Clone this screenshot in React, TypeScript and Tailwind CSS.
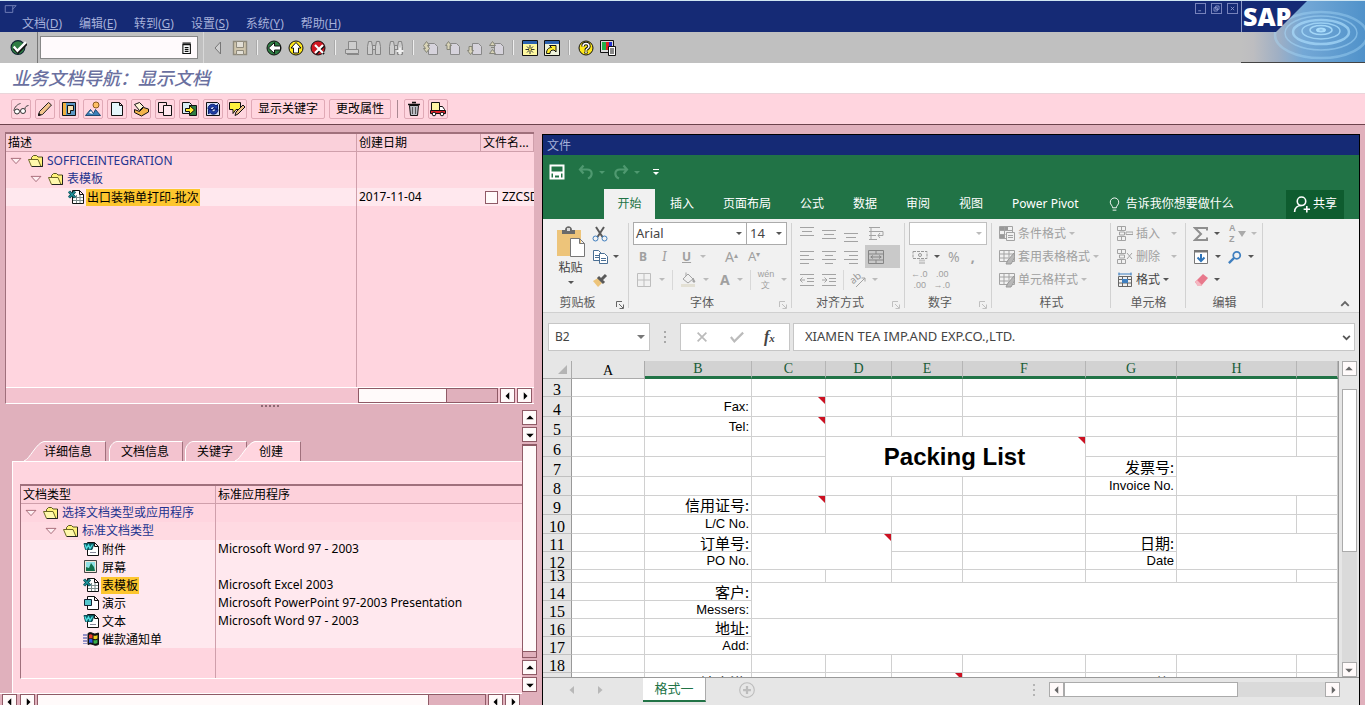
import React from 'react';
import type { ReactNode } from 'react';

type Kids = { children?: ReactNode };

function Svg({ children, className = 'w-4 h-4' }: Kids & { className?: string }) {
  return (
    <svg viewBox="0 0 16 16" className={`shrink-0 ${className}`} fill="none" stroke="#111" aria-hidden="true">
      {children}
    </svg>
  );
}

/* ---------- system toolbar icons ---------- */

const Check = () => (
  <Svg className="w-[17px] h-[17px]">
    <circle cx="7.5" cy="8" r="6.5" fill="#2f7d43" stroke="#123" />
    <path d="M4 8.5l3.5 3.5L15.5 4" stroke="#111" strokeWidth="3.4" />
    <path d="M3.5 7l3.5 4L15 3" stroke="#fff" strokeWidth="2.2" />
  </Svg>
);
const TriLeft = () => (
  <Svg><path d="M10.500 2v12L5 8z" fill="#d0d0d0" stroke="#777" /></Svg>
);
const Save = () => (
  <Svg>
    <path d="M1.5 1.5h13v13h-13z" fill="#cfc5ac" stroke="#8f8a7c" strokeWidth="1.4" />
    <path d="M4.5 1.5h7v6h-7zM4.5 10.5h7v4h-7z" fill="#e2dfd6" stroke="#8f8a7c" />
  </Svg>
);
const Back = () => (
  <Svg>
    <circle cx="8" cy="8" r="7" fill="#2f7d43" />
    <path d="M2.5 8L8.5 2.500v3.500h6v4h-6v3.500z" fill="#fff" />
  </Svg>
);
const Up = () => (
  <Svg>
    <circle cx="8" cy="8" r="7" fill="#ffe81a" />
    <path d="M8 2.5L13 8h-2.5v5h-5V8H3z" fill="#fff" />
  </Svg>
);
const Cancel = () => (
  <Svg>
    <circle cx="8" cy="8" r="7" fill="#d01822" />
    <path d="M6 6l8 8M14 6l-8 8" stroke="#111" strokeWidth="2" />
    <path d="M5 5l8 8M13 5l-8 8" stroke="#fff" strokeWidth="2.2" />
  </Svg>
);
const Print = () => (
  <Svg><path d="M4.5 9.500V1.5h8v8M1.5 9.5h13v4h-13zM3 14.500h12" fill="#cdcdcd" stroke="#888" /></Svg>
);
const Find = ({ next }: { next?: boolean }) => (
  <Svg>
    <path d="M1.5 14.5v-8l1-5h3l1 5v8zM14.5 14.5v-8l-1-5h-3l-1 5v8zM6.5 5.5h3v4h-3z" fill="#cdcdcd" stroke="#858585" />
    {next && <path d="M12 7.5v7M8.500 11h7" stroke="#eee" strokeWidth="2" />}
  </Svg>
);
const PageMove = ({ d }: { d: string }) => (
  <Svg>
    <path d="M6.5 3.5h6l3 3v8h-9z" fill="#d6d3dc" stroke="#888" />
    <path d={d} fill="#d8d3b6" stroke="#858579" />
  </Svg>
);
const NewSession = () => (
  <Svg>
    <path d="M.5.5h15v15H.5z" fill="#fff9a0" />
    <path d="M1 1h14v3H1z" fill="#2c62ae" stroke="none" />
    <path d="M8 5v9M3.5 9.5h9M5 6.5l6 6M11 6.5l-6 6" stroke="#333" />
    <path d="M7 8.5h2v2H7z" fill="#ffef3c" stroke="none" />
  </Svg>
);
const Shortcut = () => (
  <Svg>
    <path d="M.5.5h15v15H.5z" fill="#eef2da" />
    <path d="M1 1h14v3H1z" fill="#2c62ae" stroke="none" />
    <path d="M2.5 13.5c0-4 2-6 5-6L5.500 5.5h6.500v6.500l-2-2c-3 0-4 1-4 3.500z" fill="#ffee30" />
  </Svg>
);
const Help = () => (
  <Svg>
    <circle cx="8" cy="8" r="7" fill="#ffe81a" />
    <path d="M5 6.5c0-4 6-4 6 0 0 2-3 2-3 4M8 11.500v2" stroke="#111" strokeWidth="3.4" />
    <path d="M5 6.5c0-4 6-4 6 0 0 2-3 2-3 4M8 11.500v1.5" stroke="#fff" strokeWidth="1.5" />
  </Svg>
);
const Layout = () => (
  <Svg>
    <path d="M.5.5h13v12H.5z" fill="#ddd" />
    <path d="M2 2h4v8H2z" fill="#22b04a" stroke="none" />
    <path d="M6 2h3v8H6z" fill="#e02020" stroke="none" />
    <path d="M9 2h3v8H9z" fill="#2030d0" stroke="none" />
    <path d="M8.5 6.5h7v9h-7z" fill="#fff" />
    <path d="M10 9h4M10 11h4M10 13h4" />
  </Svg>
);

/* ---------- application toolbar icons ---------- */

const Glasses = () => (
  <Svg>
    <path d="M1 10C1 6 5 3 7.500 2.500M12 8c0-2 1-3 3.500-3.500" stroke="#444" />
    <circle cx="4" cy="10.5" r="2.5" fill="#fff" stroke="#333" />
    <circle cx="10" cy="10" r="2.5" fill="#fff" stroke="#333" />
  </Svg>
);
const Pencil = () => (
  <Svg>
    <path d="M1.5 14.5l1-4 9-9 3 2.5-9 9.5z" fill="#f2c48c" stroke="#222" />
    <path d="M1.5 14.5l.5-2 1.5 1.5z" fill="#111" />
  </Svg>
);
const Navigate = () => (
  <Svg>
    <path d="M1.5 1.5h13v13h-13z" fill="#5c98c4" />
    <path d="M2 2h3v12H2z" fill="#f0b040" stroke="none" />
    <path d="M6.5 4.5h6v5h-3v3h-3z" fill="#f8e1ae" />
  </Svg>
);
const Person = () => (
  <Svg>
    <circle cx="11" cy="4" r="3" fill="#ffc064" stroke="#8a5a20" />
    <path d="M.5 14.5l5-6 3 4 2-4 5 6z" fill="#3a7fb8" stroke="#1d4a70" />
    <path d="M4 12l2-2 2 3" fill="#fff" stroke="none" />
  </Svg>
);
const Page = () => (
  <Svg><path d="M2.5 1.5h8l3 3v10h-11zM10.5 1.5v3h3" fill="#e5f7fc" /></Svg>
);
const OpenBox = () => (
  <Svg>
    <path d="M1.5 3.5l5-2 4 4-4 4z" fill="#fff6d8" />
    <path d="M1.500 8.500l5 2 4-4 5 1.500v3l-7 4-7-3.500z" fill="#f2b44c" />
  </Svg>
);
const Copy = () => (
  <Svg>
    <path d="M1.5 1.5h8v10h-8z" fill="#ffe0e6" />
    <path d="M6.5 4.5h8v10h-8z" fill="#ffe9ef" />
  </Svg>
);
const Export = () => (
  <Svg>
    <path d="M1.5 1.5h7l2 2v9h-9z" fill="#d7ecf4" />
    <path d="M8.5 4.5h7v10h-7z" fill="#2f7d43" />
    <path d="M4.5 7.5h4v-3l5 4.5-5 4.5v-3h-4z" fill="#ffee30" />
  </Svg>
);
const Refresh = () => (
  <Svg>
    <path d="M1.5 1.5h11l2 2v11h-13z" fill="#d2dcf6" />
    <path d="M3 8c0-5 6-6 8-3l1.5-1.500V8H8l1.500-1.500C8 5 5.500 6 5.500 8zM13 8.500c0 5-6 6-8 3L3.500 13V8.500H8L6.500 10c1.500 1.500 4 .5 4-1.500z" fill="#1f3fa8" stroke="#0c1f70" />
  </Svg>
);
const NoteEdit = () => (
  <Svg>
    <path d="M.5 1.5h11v7H7l-3 4v-4H.5z" fill="#ffef3c" />
    <path d="M6 14.500l1-3.500 7-7 2 2-7 7z" fill="#f2c48c" />
  </Svg>
);
const Trash = () => (
  <Svg>
    <path d="M3.5 4.5h9l-1 10h-7z" fill="#b9bcc4" />
    <path d="M2 3.5h12M6 1.5h4" strokeWidth="1.5" />
    <path d="M6.5 6v7M9.5 6v7" stroke="#555" />
  </Svg>
);
const Truck = () => (
  <Svg>
    <path d="M1.5 1.5h8v8h-8z" fill="#fff3a4" />
    <path d="M9.5 5.5h3l2 3v2h-5z" fill="#fff" />
    <path d="M.5 9.5h15v3H.5z" fill="#e0202a" />
    <circle cx="4" cy="13" r="1.8" fill="#fff" />
    <circle cx="12" cy="13" r="1.8" fill="#fff" />
  </Svg>
);

/* ---------- tree icons ---------- */

const Folder = () => (
  <Svg>
    <path d="M3.5 12.5v-8l2-2h3l1.500 1.500h4.500v9.500z" fill="#fff27a" stroke="#5a5620" />
    <path d="M3.5 13.5l-3-7h9.500l3 7z" fill="#fff8ac" stroke="#6d6826" />
    <path d="M14.5 4v9.500H4" stroke="#222" />
  </Svg>
);
const Expander = () => (
  <Svg className="w-3 h-3"><path d="M1.5 4.500h13L8 11.500z" fill="#ffeef2" stroke="#8d4a58" /></Svg>
);
function DocIcon({ kind }: { kind: string }) {
  if (kind === 'image')
    return (
      <Svg>
        <path d="M1.5 1.5h12v12h-12z" fill="#eee6d8" stroke="#444" />
        <path d="M3 3h9v9H3z" fill="#8fe0e4" stroke="none" />
        <path d="M3 12V8l3 1 2-5 3 4 1 4z" fill="#12704c" stroke="none" />
      </Svg>
    );
  if (kind === 'windows')
    return (
      <Svg>
        <path d="M5 2.500c2-1.500 3-1 5 0s3 0 5.5-.5V13.500c-3 1.5-4 .5-5.5 0s-3-1-5 0z" fill="#111" />
        <path d="M6 4c1-1 2-1 3.500 0v3.500C8 7 7 7 6 7.500z" fill="#e53a2e" stroke="none" />
        <path d="M10.500 4.500c1 .5 2 .5 4-.5v3.500c-2 1-3 .5-4 .5z" fill="#f0d020" stroke="none" />
        <path d="M6 8.500c1-1 2-1 3.500 0V12c-1.500-1-2.500-.5-3.500 0z" fill="#2d5be0" stroke="none" />
        <path d="M10.500 9c1 .5 2 .5 4-.5V12c-2 1-3 .5-4 .5z" fill="#36b04a" stroke="none" />
        <path d="M1 3v10M3 3v10" stroke="#2b3da0" strokeDasharray="2 1" />
      </Svg>
    );
  return (
    <Svg>
      <path d="M4.5 1.5h7l4 4v9h-11zM11.500 1.5v4h4" fill="#fff" />
      {kind === 'excel' && (
        <>
          <path d="M5 8.500h10M5 11.5h10M8.5 6v8M12 6v8" stroke="#7b8a8a" />
          <path d="M1 2.500l6 6M7 2.500l-6 6" stroke="#0b4f58" strokeWidth="3" />
          <path d="M1 2.500l6 6M7 2.500l-6 6" stroke="#27b9bf" />
        </>
      )}
      {kind === 'word' && (
        <>
          <path d="M7 11.5h6" stroke="#889" />
          <path d="M1 2.500h10l-2 6H2.500z" fill="#0b5f68" stroke="#0b4f58" />
          <path d="M2 3.500l1.500 4L5.500 4l1.500 3.500L9.500 3.500" stroke="#4fe0e2" strokeWidth="1.3" />
        </>
      )}
      {kind === 'slides' && <path d="M1.5 4.5h7v6h-7z" fill="#55c6cc" stroke="#123" />}
    </Svg>
  );
}

/* ---------- ribbon icons ---------- */

const GREY = '#a3a3a3';

function Caret({ dark }: { dark?: boolean }) {
  return <span className={`shrink-0 border-x-[3px] border-t-[3px] border-x-transparent ${dark ? 'border-t-[#555]' : 'border-t-[#bbb]'}`} />;
}
function Lines({ d, s = GREY }: { d: string; s?: string }) {
  return <Svg><path d={d} stroke={s} /></Svg>;
}
const Launcher = ({ dark }: { dark?: boolean }) => (
  <svg viewBox="0 0 8 8" className="w-2 h-2" fill="none" stroke={dark ? '#666' : '#c0c0c0'} aria-hidden="true">
    <path d="M.5 6V.5H6M3 3l4 4M7.5 3.5v4h-4" />
  </svg>
);
const Paste = () => (
  <svg viewBox="0 0 30 32" className="w-[30px] h-8" fill="none" aria-hidden="true">
    <path d="M1 4h24v26H1z" fill="#edc47a" />
    <path d="M6 4h3c0-5 7-5 7 0h3v4H6z" fill="#6a6a6a" />
    <path d="M11 2h3v3h-3z" fill="#ddd" />
    <path d="M14.5 12.5h9l5 5v13h-14zM23.5 12.5v5h5" fill="#fff" stroke="#777" />
  </svg>
);
const Cut = () => (
  <Svg>
    <path d="M4 1l6.5 10M12 1L5.5 11" stroke="#5a5a5a" strokeWidth="2" />
    <circle cx="3.5" cy="12.500" r="2.5" stroke="#3f7fbf" />
    <circle cx="12.5" cy="12.5" r="2.5" stroke="#3f7fbf" />
  </Svg>
);
const CopyDocs = () => (
  <Svg>
    <path d="M1.5 1.5h5l3 3v7h-8zM3 6.5h4M3 8.5h4" fill="#fff" stroke="#4a6f94" />
    <path d="M7.5 4.5h5l3 3v7h-8zM9 9.5h5M9 11.5h5" fill="#fff" stroke="#4a6f94" />
  </Svg>
);
const Brush = () => (
  <Svg>
    <path d="M1 9l5-3 4 5-4 4z" fill="#edc47a" stroke="none" />
    <path d="M6 5l6 6M9 8l5-5" stroke="#5a5a5a" strokeWidth="3" />
  </Svg>
);
const TableBrush = () => (
  <Svg>
    <path d="M.5 1.5h15v11H.5zM.5 5h15M.5 9h10M5 1.5v11M10 1.5v7" stroke={GREY} />
    <path d="M15 4l-6 7-2 4h5l4-7z" fill="#b8b8b8" stroke="#999" />
  </Svg>
);
const CondFormat = () => (
  <Svg>
    <path d="M.5.5h13v12H.5zM.5 4.5h13M5.5.5v12M.5 8.5h6" stroke={GREY} />
    <path d="M1 1h4v3H1zM6 1h3v3H6zM1 9h4v3H1z" fill="#999" stroke="none" />
    <path d="M7.5 6.5h8v8h-8zM9 9.5h5M9 11.5h5" fill="#f1f1f1" stroke={GREY} />
  </Svg>
);
const CellsInsert = ({ del }: { del?: boolean }) => (
  <Svg>
    <path d="M.5.5h8v4h-8zM.5 10.5h8v4h-8zM4.5.5v4M4.5 10.5v4M2.500 6h5v3h-5z" stroke={GREY} />
    <path d={del ? 'M10 4l5 6M15 4l-5 6' : 'M9 6h7v2.500H9z'} stroke={GREY} />
  </Svg>
);
const CellsFormat = () => (
  <Svg>
    <path d="M1.5 4.5h13v10h-13zM1.5 7.5h13M1.5 11h13M5.5 4.5v10M10.5 4.5v10" stroke="#666" />
    <path d="M1.5 2h13M2 .5v3M14 .5v3" stroke="#3f7fbf" />
    <path d="M5 7h6v4H5z" fill="#3f7fbf" stroke="none" />
  </Svg>
);
const FillDown = () => (
  <Svg>
    <path d="M1.5 1.5h13v13h-13z" fill="#fff" stroke="#777" />
    <path d="M1 1h14v2.500H1z" fill="#777" stroke="none" />
    <path d="M8 5v7M4.5 8.5L8 12l3.500-3.500" stroke="#2f74b8" strokeWidth="2" />
  </Svg>
);
const Magnifier = () => (
  <Svg className="w-[14px] h-[14px]">
    <circle cx="10" cy="6" r="4" stroke="#3f7fbf" strokeWidth="2" />
    <path d="M7 9l-6 6" stroke="#3f7fbf" strokeWidth="2.6" />
  </Svg>
);
const Eraser = () => (
  <Svg>
    <path d="M2 10l8-8 5 4-7 8H5z" fill="#e8798c" stroke="none" />
    <path d="M2 10l2-2 5 5-1 1H5z" fill="#f5b8c2" stroke="none" />
  </Svg>
);
const Bucket = () => (
  <Svg>
    <path d="M3 7l5-5 5 5-5 4zM6 4V.5" stroke={GREY} />
    <path d="M13 6l2 4h-2z" fill={GREY} stroke={GREY} />
    <path d="M1 12h14v3H1z" fill="#e3e0d4" stroke="none" />
  </Svg>
);
const Currency = () => (
  <Svg>
    <path d="M1 2.5h14v7H1z" stroke="#999" strokeDasharray="3 1" />
    <circle cx="8" cy="6" r="1.5" stroke="#999" />
    <path d="M7 11.5h6M7 14h6" stroke="#c9c9c9" strokeWidth="2" />
  </Svg>
);
const Orient = () => (
  <Svg>
    <path d="M6 15l9-9M11.500 6H15v3.500" stroke={GREY} />
    <text x="1" y="11" transform="rotate(-40 4 9)" fontSize="10" fontFamily="Noto Sans" fill="#999" stroke="none">ab</text>
  </Svg>
);

/* ---------- scrollbars ---------- */

const arrowPath: Record<string, string> = {
  left: 'M5 1v6L2 4z',
  right: 'M3 1v6l3-3z',
  up: 'M1 5h6L4 2z',
  down: 'M1 3h6L4 6z',
};

function ArrowBtn({ dir, grey }: { dir: string; grey?: boolean }) {
  return (
    <button
      aria-label={`scroll ${dir}`}
      className={`flex h-[15px] w-[15px] shrink-0 items-center justify-center border bg-[#fffafa] ${grey ? 'border-[#ababab]' : 'border-[#8f5a66]'}`}
    >
      <svg viewBox="0 0 8 8" className="w-[10px] h-[10px]" fill={grey ? '#666' : '#000'} aria-hidden="true">
        <path d={arrowPath[dir]} />
      </svg>
    </button>
  );
}

/* ---------- SAP frame ---------- */

const menus = [['文档', 'D'], ['编辑', 'E'], ['转到', 'G'], ['设置', 'S'], ['系统', 'Y'], ['帮助', 'H']];

const moves = [
  'M1.500 5.500l3-4 3 4h-2l2 3-3 4-3-4h2l-2-3z',
  'M1.500 5.500l3-4 3 4H6v4H3v-4z',
  'M1.500 10.500H3v-4h3v4h1.500l-3 4z',
  'M1.500 5.500l3-4 3 4zM1.500 13.500l3-4 3 4zM3 7.500h3',
];

const systemTools: { name: string; icon: ReactNode }[][] = [
  [{ name: '保存', icon: <Save /> }],
  [{ name: '返回', icon: <Back /> }, { name: '退出', icon: <Up /> }, { name: '取消', icon: <Cancel /> }],
  [{ name: '打印', icon: <Print /> }, { name: '查找', icon: <Find /> }, { name: '继续查找', icon: <Find next /> }],
  moves.map((d, i) => ({ name: `页 ${i + 1}`, icon: <PageMove d={d} /> })),
  [{ name: '新会话', icon: <NewSession /> }, { name: '快捷方式', icon: <Shortcut /> }],
  [{ name: '帮助', icon: <Help /> }, { name: '布局', icon: <Layout /> }],
];

function Header() {
  return (
    <header className="flex h-[63px] shrink-0 border-t border-[#cfe6f2] border-b border-b-[#444]">
      <div className="flex min-w-0 flex-1 flex-col">
        <div className="h-[31px] bg-[#152a75] text-[#a6b0da]">
          <div className="flex h-[14px] items-start justify-between pl-[3px] pr-[3px] pt-[2px]">
            <Svg className="w-[15px] h-[12px]"><path d="M1 3.5h10v9H1zM11 3.5h4.500l-5 5" stroke="#8894c8" /></Svg>
            <div className="flex gap-[5px]">
              {['M4 12h5', 'M6.5 3.5h6v6h-6zM3.5 6.5h6v6h-6z', 'M5 5l6 6M11 5l-6 6'].map((d) => (
                <button key={d} aria-label="window" className="h-[11px] w-[11px] border border-[#7682bb]">
                  <svg viewBox="0 0 16 16" className="h-full w-full" fill="none" stroke="#8f9bd0" strokeWidth="1.5" aria-hidden="true"><path d={d} /></svg>
                </button>
              ))}
            </div>
          </div>
          <nav className="flex gap-[17px] pl-[22px] text-xs leading-[18px]">
            {menus.map(([t, k]) => (
              <button key={k}>{t}(<u>{k}</u>)</button>
            ))}
          </nav>
        </div>
        <div className="flex flex-1 items-center bg-[#c0c0c0]">
          <button aria-label="确认" className="flex w-[38px] justify-center border-r border-[#777] py-[7px] pr-px"><Check /></button>
          <div className="ml-[2px] flex h-[23px] w-[158px] items-center border border-[#888] bg-[#fffafc] pr-1">
            <input aria-label="命令" className="h-full min-w-0 flex-1 bg-transparent px-1 outline-none" />
            <Svg className="w-[12px] h-3"><path d="M2.500 3.500h10v12h-10z" fill="#fff" strokeWidth="1.5" /><path d="M5 7.500h5M5 10h5M5 12.500h5M2 1.500h11" strokeWidth="1.5" /></Svg>
          </div>
          <div className="ml-[5px] h-full w-px bg-[#d9d9d9]" />
          <button aria-label="收起" className="ml-[3px] flex w-[22px] justify-center"><TriLeft /></button>
          {systemTools.map((group, i) => (
            <div key={i} className="flex items-center">
              {i > 0 && <div className="mx-[5px] h-[15px] w-[2px] border-r border-[#eee] bg-[#aaa]" />}
              {group.map((t) => (
                <button key={t.name} aria-label={t.name} className="flex w-[22px] justify-center">{t.icon}</button>
              ))}
            </div>
          ))}
        </div>
      </div>
      <div className="relative w-[124px] shrink-0">
        <svg viewBox="0 0 124 61" className="h-[61px] w-[124px]" fill="none" aria-hidden="true">
          <defs>
            <linearGradient id="sea" x1="0" y1="0" x2="1" y2="0">
              <stop offset="0" stopColor="#c0c0c0" />
              <stop offset=".1" stopColor="#bdbdc0" />
              <stop offset=".3" stopColor="#9fafc4" />
              <stop offset=".5" stopColor="#74a8d6" />
              <stop offset="1" stopColor="#5092ca" />
            </linearGradient>
          </defs>
          <path d="M0 0h124v61H0z" fill="url(#sea)" />
          <g stroke="#a9dcfb">
            <ellipse cx="80" cy="29" rx="4" ry="1.500" strokeWidth="2" />
            <ellipse cx="80" cy="29" rx="11" ry="4.500" strokeWidth="1.500" opacity=".9" />
            <ellipse cx="80" cy="30" rx="19" ry="8" strokeWidth="1.500" opacity=".8" />
            <ellipse cx="80" cy="31" rx="28" ry="12" strokeWidth="2.500" opacity=".7" />
            <ellipse cx="80" cy="32" rx="36" ry="17" strokeWidth="1.500" opacity=".5" />
            <ellipse cx="80" cy="34" rx="46" ry="23" strokeWidth="2.500" opacity=".4" />
          </g>
          <path d="M0 0h66L35 31H0z" fill="#152a75" />
          <path d="M.5 0v31" stroke="#8f9cc8" />
        </svg>
        <span className="absolute left-[2px] top-0 font-['Open_Sans'] text-[25px] font-extrabold leading-[31px] text-white">SAP</span>
      </div>
    </header>
  );
}

const appTools: { name: string; icon: ReactNode }[] = [
  { name: '显示', icon: <Glasses /> },
  { name: '更改', icon: <Pencil /> },
  { name: '导航', icon: <Navigate /> },
  { name: '用户', icon: <Person /> },
  { name: '创建', icon: <Page /> },
  { name: '打开', icon: <OpenBox /> },
  { name: '复制', icon: <Copy /> },
  { name: '导出', icon: <Export /> },
  { name: '刷新', icon: <Refresh /> },
  { name: '注释', icon: <NoteEdit /> },
];

function ToolButton({ name, children }: Kids & { name: string }) {
  return (
    <button aria-label={name} className="flex h-5 w-5 items-center justify-center rounded-[2px] border border-[#e0a9b6]">
      {children}
    </button>
  );
}

function AppToolbar() {
  return (
    <div className="flex h-[31px] shrink-0 items-center gap-1 border-b border-[#6d434d] bg-[#ffd5df] pl-[11px] text-xs">
      {appTools.map((t) => (
        <ToolButton key={t.name} name={t.name}>{t.icon}</ToolButton>
      ))}
      <button className="h-5 w-[74px] rounded-[2px] border border-[#e0a9b6]">显示关键字</button>
      <button className="h-5 w-[62px] rounded-[2px] border border-[#e0a9b6]">更改属性</button>
      <div className="mx-[2px] h-[18px] w-px bg-[#a98791]" />
      <ToolButton name="删除"><Trash /></ToolButton>
      <ToolButton name="运输"><Truck /></ToolButton>
    </div>
  );
}

/* ---------- left side ---------- */

type Node = { label: string; level: number; kind: string; cols?: string[]; on?: boolean };

function TreeLabel({ node }: { node: Node }) {
  if (node.kind === 'folder')
    return (
      <span className={`flex items-center text-[#24348f] ${node.level ? 'pl-[22px]' : 'pl-[2px]'}`}>
        <Expander />
        <span className="ml-[6px] mr-[3px]"><Folder /></span>
        {node.label}
      </span>
    );
  return (
    <span className="flex items-center pl-[60px]">
      <DocIcon kind={node.kind} />
      <span className={`ml-[2px] px-px leading-[17px] ${node.on ? 'bg-[#fdc62e]' : ''}`}>{node.label}</span>
    </span>
  );
}

const docs: Node[] = [
  { label: 'SOFFICEINTEGRATION', level: 0, kind: 'folder' },
  { label: '表模板', level: 1, kind: 'folder' },
  { label: '出口装箱单打印-批次', level: 2, kind: 'excel', on: true, cols: ['2017-11-04', 'ZZCSD'] },
];

const types: Node[] = [
  { label: '选择文档类型或应用程序', level: 0, kind: 'folder' },
  { label: '标准文档类型', level: 1, kind: 'folder' },
  { label: '附件', level: 2, kind: 'word', cols: ['Microsoft Word 97 - 2003'] },
  { label: '屏幕', level: 2, kind: 'image' },
  { label: '表模板', level: 2, kind: 'excel', on: true, cols: ['Microsoft Excel 2003'] },
  { label: '演示', level: 2, kind: 'slides', cols: ['Microsoft PowerPoint 97-2003 Presentation'] },
  { label: '文本', level: 2, kind: 'word', cols: ['Microsoft Word 97 - 2003'] },
  { label: '催款通知单', level: 2, kind: 'windows' },
];

const rowBg = (n: Node) => (n.level === 2 ? 'bg-[#ffe8ee]' : n.level === 1 ? 'bg-[#ffdae2]' : 'bg-[#ffd5df]');
const cell = 'overflow-hidden whitespace-nowrap p-0 pl-[2px]';

function DocumentTree() {
  return (
    <div className="flex h-[272px] shrink-0 flex-col border-b border-l border-t-2 border-b-white border-l-[#a0707c] border-t-[#a0707c] bg-[#ffd5df]">
      <table className="h-[253px] w-full table-fixed border-separate border-spacing-0 text-xs">
        <colgroup>
          <col className="w-[351px]" />
          <col className="w-[124px]" />
          <col />
        </colgroup>
        <thead>
          <tr className="h-[18px] bg-[#fad0da] text-left leading-4">
            {['描述', '创建日期', '文件名...'].map((h) => (
              <th key={h} className={`${cell} border-b border-r border-[#cf9fab] font-normal`}>{h}</th>
            ))}
          </tr>
        </thead>
        <tbody>
          {docs.map((n) => (
            <tr key={n.label} className={`h-[18px] leading-4 ${rowBg(n)}`}>
              <td className={`${cell} border-r border-[#cf9fab]`}><TreeLabel node={n} /></td>
              <td className={cell}>{n.cols?.[0]}</td>
              <td className={cell}>
                {n.cols && (
                  <label className="flex items-center gap-1 pl-[2px]">
                    <input type="checkbox" className="h-[13px] w-[13px] shrink-0 appearance-none border border-[#8f5a66] bg-[#fffafa]" />
                    {n.cols[1]}
                  </label>
                )}
              </td>
            </tr>
          ))}
          <tr>
            <td className="border-r border-[#cf9fab]" />
            <td />
            <td />
          </tr>
        </tbody>
      </table>
      <div className="flex h-4 shrink-0 border-t border-white bg-[#f3c3cf] pl-[352px]">
        <div className="flex h-[15px] min-w-0 flex-1 border border-[#8f5a66] bg-[#e0b0bc]">
          <div className="w-[88px] border-r border-[#8f5a66] bg-[#fffafa]" />
        </div>
        <div className="ml-[2px] mr-[2px] flex gap-[2px]">
          <ArrowBtn dir="left" />
          <ArrowBtn dir="right" />
        </div>
      </div>
    </div>
  );
}

const tabText = 'flex h-5 items-center border-r border-t border-r-[#a0707c] border-t-white text-xs';

function Slant({ wide, fill }: { wide?: boolean; fill: string }) {
  return wide ? (
    <svg viewBox="0 0 20 20" className="h-5 w-5" aria-hidden="true">
      <path d="M0 20C6 18 12 2 20 0v20z" fill={fill} />
      <path d="M0 20C6 18 12 2 20 .5" fill="none" stroke="#fff" />
    </svg>
  ) : (
    <svg viewBox="0 0 8 20" className="h-5 w-2" aria-hidden="true">
      <path d="M0 20V9C1 5 4 1 8 0v20z" fill={fill} />
      <path d="M.5 20V9C1 5 4 1 8 .5" fill="none" stroke="#fff" />
    </svg>
  );
}

function DetailTabs() {
  return (
    <div role="tablist" className="flex h-5 pl-6">
      <button role="tab" className="flex"><Slant wide fill="#f3c3cf" /><span className={`${tabText} w-[62px] bg-[#f3c3cf]`}>详细信息</span></button>
      <button role="tab" className="ml-[3px] flex"><Slant fill="#f3c3cf" /><span className={`${tabText} w-[66px] bg-[#f3c3cf] pl-1`}>文档信息</span></button>
      <button role="tab" className="ml-[2px] flex"><Slant fill="#f3c3cf" /><span className={`${tabText} w-[54px] bg-[#f3c3cf] pl-1`}>关键字</span></button>
      <button role="tab" aria-selected="true" className="-ml-[12px] flex"><Slant wide fill="#ffd5df" /><span className={`${tabText} w-[46px] bg-[#ffd5df] pl-1`}>创建</span></button>
    </div>
  );
}

function TypePanel() {
  return (
    <div className="flex min-h-0 flex-1">
      <div className="flex min-w-0 flex-1 flex-col">
        <div className="min-h-0 flex-1 overflow-hidden pt-[34px]">
          <DetailTabs />
          <div className="ml-[12px] h-full border-l border-t border-white bg-[#ffd5df] pl-[7px] pt-[22px]">
            <table className="h-[195px] w-full table-fixed border-separate border-spacing-0 border-b border-l border-t-2 border-b-white border-l-[#a0707c] border-t-[#a0707c] text-xs">
              <colgroup>
                <col className="w-[195px]" />
                <col />
              </colgroup>
              <thead>
                <tr className="h-[18px] bg-[#fdd1db] text-left leading-4">
                  <th className={`${cell} border-b border-r border-[#cf9fab] font-normal`}>文档类型</th>
                  <th className={`${cell} border-b border-[#cf9fab] font-normal`}>标准应用程序</th>
                </tr>
              </thead>
              <tbody>
                {types.map((n) => (
                  <tr key={n.label + n.level} className={`h-[18px] leading-4 ${rowBg(n)}`}>
                    <td className={`${cell} border-r border-[#cf9fab]`}><TreeLabel node={n} /></td>
                    <td className={cell}>{n.cols?.[0]}</td>
                  </tr>
                ))}
                <tr>
                  <td className="border-r border-[#cf9fab]" />
                  <td />
                </tr>
              </tbody>
            </table>
          </div>
        </div>
        <div className="flex h-[12px] shrink-0 overflow-hidden border-t border-white pl-[2px]">
          <div className="mr-[2px] flex gap-[3px]">
            <ArrowBtn dir="left" />
            <ArrowBtn dir="right" />
          </div>
          <div className="flex h-[15px] flex-1 border border-[#8f5a66] bg-[#e0b0bc]">
            <div className="w-[391px] border-r border-[#8f5a66] bg-[#fffafa]" />
          </div>
          <div className="mx-[2px] flex gap-[2px]">
            <ArrowBtn dir="left" />
            <ArrowBtn dir="right" />
          </div>
        </div>
      </div>
      <div className="mb-[13px] mr-[2px] mt-[3px] flex w-[15px] flex-col gap-[2px]">
        <ArrowBtn dir="up" />
        <ArrowBtn dir="down" />
        <div className="flex min-h-0 flex-1 flex-col border border-t-2 border-[#8f5a66] bg-[#e0b0bc]">
          <div className="mb-[5px] flex-1 border-b border-[#8f5a66] bg-[#fffafa]" />
        </div>
        <ArrowBtn dir="up" />
        <ArrowBtn dir="down" />
      </div>
    </div>
  );
}

/* ---------- spreadsheet ---------- */

const ribbonTabs = ['插入', '页面布局', '公式', '数据', '审阅', '视图', 'Power Pivot'];

function SheetTop() {
  return (
    <div className="bg-[#217346] text-white">
      <div className="flex h-[34px] items-center pl-[6px]">
        <button aria-label="save">
          <Svg>
            <path d="M1.5 1.5h13v13h-13z" stroke="#fff" strokeWidth="2" />
            <path d="M2 8.5h12M5 14v-3.500h6V14" stroke="#fff" strokeWidth="2" />
          </Svg>
        </button>
        <button aria-label="undo" className="ml-[13px] flex items-center gap-[5px]">
          <Svg><path d="M5.500 1.500L2 5.5l3.500 4M2 5.5h7c6 0 6 7 1 9" stroke="#4f9970" strokeWidth="2.2" /></Svg>
          <span className="border-x-[3px] border-t-[3px] border-x-transparent border-t-[#4f9970]" />
        </button>
        <button aria-label="redo" className="ml-[8px] flex items-center gap-[5px]">
          <Svg><path d="M10.500 1.500L14 5.5l-3.500 4M14 5.5H7c-6 0-6 7-1 9" stroke="#4f9970" strokeWidth="2.2" /></Svg>
          <span className="border-x-[3px] border-t-[3px] border-x-transparent border-t-[#4f9970]" />
        </button>
        <button aria-label="customize" className="ml-[13px]">
          <span className="mb-[2px] block h-px w-[6px] bg-white" />
          <span className="block border-x-[3px] border-t-[3px] border-x-transparent border-t-white" />
        </button>
      </div>
      <div className="flex h-[30px] items-center pl-[61px] pr-[15px] text-xs">
        <button className="h-[30px] w-[51px] bg-[#f1f1f1] text-[#217346]">开始</button>
        <div className="ml-[15px] flex gap-[29px]">
          {ribbonTabs.map((t) => <button key={t}>{t}</button>)}
        </div>
        <button className="ml-[28px] flex items-center gap-1">
          <Svg className="w-[15px] h-[15px]"><path d="M6 11.500C6 9 3.5 8.5 3.5 5.5a4.500 4.500 0 0 1 9 0c0 3-2.500 3.500-2.500 6zM6 14h4" stroke="#fff" /></Svg>
          告诉我你想要做什么
        </button>
        <button className="ml-auto flex h-[29px] w-[58px] items-center justify-center gap-[3px] bg-[#0e5c2f]">
          <Svg className="w-[17px] h-[17px]">
            <circle cx="8" cy="5" r="4" stroke="#fff" strokeWidth="1.5" />
            <path d="M1.500 15c0-4 3-6 6.500-6M10 12.5h6M13 9.5v6" stroke="#fff" strokeWidth="1.5" />
          </Svg>
          共享
        </button>
      </div>
    </div>
  );
}

type GroupProps = Kids & { label: string; className: string; launcher?: 'dark' | 'light' };

function Group({ label, className, launcher, children }: GroupProps) {
  return (
    <section className={`relative flex shrink-0 flex-col pt-[3px] after:absolute after:bottom-1 after:right-0 after:top-1 after:w-px after:bg-[#d2d2d2] ${className}`}>
      <div className="h-[69px]">{children}</div>
      <div className={`relative text-center leading-[23px] text-[#5a5a5a] ${launcher ? 'pr-[17px]' : ''}`}>
        {label}
        {launcher && <button aria-label={label} className="absolute right-[5px] top-[10px]"><Launcher dark={launcher === 'dark'} /></button>}
      </div>
    </section>
  );
}

const Row = ({ children, className = '' }: Kids & { className?: string }) => (
  <div className={`flex h-[23px] items-center ${className}`}>{children}</div>
);
const Sep = () => <span className="h-5 w-px shrink-0 bg-[#d8d8d8]" />;
const tiny = "font-['Liberation_Sans'] text-[9px] leading-[11px]";

function Ribbon() {
  return (
    <div className="flex h-[94px] overflow-hidden border-b border-[#d0d0d0] bg-[#f1f1f1] text-xs text-[#a0a0a0]">
      <Group label="剪贴板" className="w-[86px]" launcher="dark">
        <div className="flex pl-[12px]">
          <button className="flex w-[31px] flex-col items-center pt-[4px] text-[#444]">
            <Paste />
            <span className="mb-[3px] w-6 text-center leading-5">粘贴</span>
            <Caret dark />
          </button>
          <div className="ml-[6px]">
            <Row><button aria-label="cut"><Cut /></button></Row>
            <Row className="gap-[5px]"><button aria-label="copy"><CopyDocs /></button><Caret dark /></Row>
            <Row><button aria-label="format painter"><Brush /></button></Row>
          </div>
        </div>
      </Group>
      <Group label="字体" className="w-[163px]" launcher="light">
        <Row className="pl-1 text-[#444]">
          <button className="flex h-[23px] w-[114px] items-center justify-between border border-[#ababab] bg-white pl-[2px] pr-1 text-[13px]">Arial <Caret dark /></button>
          <button className="-ml-px flex h-[23px] w-[41px] items-center justify-between border border-[#ababab] bg-white pl-[3px] pr-1 text-[13px]">14 <Caret dark /></button>
        </Row>
        <Row className="pl-[10px]">
          <b className="w-[22px]">B</b>
          <i className="w-[21px] pl-px font-serif text-sm">I</i>
          <b className="w-[18px]"><u>U</u></b>
          <Caret />
          <span className="ml-[9px] mr-[10px]"><Sep /></span>
          <span className="w-[23px] whitespace-nowrap text-sm">A<sup className="text-[8px]">▴</sup></span>
          <span className="whitespace-nowrap text-[13px]">A<sup className="text-[8px]">▾</sup></span>
        </Row>
        <Row className="gap-[7px] pl-[7px]">
          <Lines d="M1.5 1.5h13v13h-13zM8 1v14M1 8h14" s="#bdbdbd" />
          <Caret />
          <Sep />
          <Bucket />
          <Caret />
          <span className="pl-1 text-sm font-bold leading-4">A</span>
          <Caret />
          <Sep />
          <span className={`text-center ${tiny}`}>wén<br />文</span>
          <Caret />
        </Row>
      </Group>
      <Group label="对齐方式" className="w-[113px]" launcher="light">
        <Row className="gap-[6px] pl-[7px]">
          <Lines d="M1 1.5h14M3 5.5h10M1 9.5h14" />
          <Lines d="M1 4.5h14M3 8.5h10M1 12.5h14" />
          <Lines d="M1 7.5h14M3 11.5h10M1 15.500h14" />
          <span className="pl-[3px]"><Lines d="M1 1.5h11M1 5.5h14v4h-5M1 9.5h7M1 13.5h8M3 1v13M12 7l-2 2.500 2 2.500" /></span>
        </Row>
        <Row className="gap-[6px] pl-[7px]">
          <Lines d="M1 2.5h14M1 6.5h9M1 10.5h14M1 14.5h9" />
          <Lines d="M1 2.5h14M4 6.5h8M1 10.5h14M4 14.5h8" />
          <Lines d="M1 2.5h14M6 6.5h9M1 10.5h14M6 14.5h9" />
          <span className="flex h-[23px] w-[35px] items-center bg-[#c9c9c9] pl-[3px]">
            <Lines d="M.5 1.5h15v13H.5zM.5 5h15M.5 11h15M8 1.5V5M8 11v3.500M2.500 8h11M5 6.500L3 8l2 1.500M11 6.500L13 8l-2 1.500" s="#858585" />
          </span>
        </Row>
        <Row className="gap-[6px] pl-[7px]">
          <Lines d="M1 2.5h14M8 6.5h7M8 9.5h7M1 13.5h14M6 8H1M3.500 5.5L1 8l2.500 2.500" />
          <Lines d="M1 2.5h14M8 6.5h7M8 9.5h7M1 13.5h14M1 8h5M3.500 5.5L6 8l-2.500 2.500" />
          <Sep />
          <Orient />
          <Caret />
        </Row>
      </Group>
      <Group label="数字" className="w-[87px]" launcher="light">
        <Row className="pl-1">
          <button aria-label="number format" className="flex h-[23px] w-[78px] items-center justify-end border border-[#c0c0c0] bg-white pr-1"><Caret /></button>
        </Row>
        <Row className="gap-[6px] pl-[7px]">
          <Currency />
          <Caret dark />
          <span className="pl-[2px] text-sm">%</span>
          <b className="pl-[5px] text-sm">,</b>
        </Row>
        <Row className={`gap-[6px] whitespace-nowrap pl-[6px] ${tiny}`}>
          <span>←.0<br />&nbsp;.00</span>
          <span>&nbsp;.00<br />→.0</span>
        </Row>
      </Group>
      <Group label="样式" className="w-[119px]">
        <Row className="gap-[3px] pl-[7px]"><CondFormat />条件格式 <Caret /></Row>
        <Row className="gap-[3px] pl-[7px]"><TableBrush />套用表格格式 <Caret /></Row>
        <Row className="gap-[3px] pl-[7px]"><TableBrush />单元格样式 <Caret /></Row>
      </Group>
      <Group label="单元格" className="w-[75px]">
        <Row className="gap-[3px] pl-[6px]"><CellsInsert />插入 <span className="w-[5px]" /><Caret /></Row>
        <Row className="gap-[3px] pl-[6px]"><CellsInsert del />删除 <span className="w-[5px]" /><Caret /></Row>
        <Row className="gap-[3px] pl-[6px] text-[#444]"><CellsFormat />格式 <Caret dark /></Row>
      </Group>
      <Group label="编辑" className="w-[77px]">
        <Row className="gap-[5px] pl-[7px]">
          <Svg><path d="M14 4.500V2H2l6 6-6 6h12v-2.500" stroke="#8f8f8f" strokeWidth="2" /></Svg>
          <Caret dark />
          <span className={`flex items-center pl-[4px] ${tiny}`}><b>A<br />Z</b><span className="ml-[2px] border-x-4 border-t-[6px] border-x-transparent border-t-[#aaa]" /></span>
          <Caret />
        </Row>
        <Row className="gap-[6px] pl-[7px]"><FillDown /><Caret dark /><span className="pl-px"><Magnifier /></span><Caret dark /></Row>
        <Row className="gap-[5px] pl-[7px]"><Eraser /><Caret dark /></Row>
      </Group>
      <button aria-label="collapse ribbon" className="ml-auto mr-[9px] self-end pb-[3px]">
        <Svg className="w-[10px] h-[10px]"><path d="M2 11l6-6 6 6" stroke="#666" strokeWidth="3" /></Svg>
      </button>
    </div>
  );
}

function FormulaBar() {
  return (
    <div className="flex h-[48px] items-start bg-[#e6e6e6] pl-[5px] pr-[4px] pt-[10px] text-xs text-[#444]">
      <div className="flex h-[28px] w-[102px] items-center justify-between border border-[#c6c6c6] bg-white pl-[6px] pr-1">
        <input aria-label="name box" defaultValue="B2" className="w-16 outline-none" />
        <span className="border-x-4 border-t-4 border-x-transparent border-t-[#777]" />
      </div>
      <div className="flex h-[28px] w-[30px] flex-col items-center justify-center gap-[3px]">
        {[0, 1, 2].map((i) => <span key={i} className="h-[2px] w-[2px] bg-[#a8a8a8]" />)}
      </div>
      <div className="flex h-[28px] w-[110px] items-center justify-around border border-[#c6c6c6] bg-white px-1">
        <button aria-label="cancel"><Svg className="w-[14px] h-[14px]"><path d="M3 3l10 10M13 3L3 13" stroke="#bbb" strokeWidth="2" /></Svg></button>
        <button aria-label="enter"><Svg className="w-[14px] h-[14px]"><path d="M1 8l4 5L15 3" stroke="#bbb" strokeWidth="2.5" /></Svg></button>
        <button aria-label="function" className="font-['Liberation_Serif'] text-base font-bold italic leading-4">f<span className="text-[11px]">x</span></button>
      </div>
      <div className="ml-[3px] flex h-[28px] flex-1 items-center border border-[#c6c6c6] bg-white pl-[11px] pr-[3px]">
        <input aria-label="formula" defaultValue="XIAMEN TEA IMP.AND EXP.CO.,LTD." className="min-w-0 flex-1 text-[13px] outline-none" />
        <Svg className="w-[9px] h-[9px]"><path d="M2 5l6 6 6-6" stroke="#555" strokeWidth="3" /></Svg>
      </div>
    </div>
  );
}

type Cell = { c?: string; t?: string; cs?: number; rs?: number; note?: boolean; title?: boolean };
const e = (n: number): Cell[] => Array.from({ length: n }, () => ({}));

const sheetRows: { n: number; h: string; cells: Cell[] }[] = [
  { n: 3, h: 'h-[18px]', cells: e(9) },
  { n: 4, h: 'h-[20px]', cells: [{}, { t: 'Fax:' }, { note: true }, ...e(6)] },
  { n: 5, h: 'h-[20px]', cells: [{}, { t: 'Tel:' }, { note: true }, ...e(6)] },
  { n: 6, h: 'h-[20px]', cells: [{}, {}, {}, { t: 'Packing List', cs: 3, rs: 2, note: true, title: true }, ...e(3)] },
  { n: 7, h: 'h-[20px]', cells: [{}, {}, {}, { c: '发票号:' }, { cs: 2, rs: 2 }] },
  { n: 8, h: 'h-[19px]', cells: [...e(6), { t: 'Invoice No.' }] },
  { n: 9, h: 'h-[19px]', cells: [{}, { c: '信用证号:' }, { note: true }, ...e(6)] },
  { n: 10, h: 'h-[19px]', cells: [{}, { t: 'L/C No.' }, ...e(7)] },
  { n: 11, h: 'h-[18px]', cells: [{}, { c: '订单号:' }, { cs: 2, rs: 2, note: true }, {}, {}, { c: '日期:' }, { cs: 2, rs: 2 }] },
  { n: 12, h: 'h-[18px]', cells: [{}, { t: 'PO No.' }, {}, {}, { t: 'Date' }] },
  { n: 13, h: 'h-[13px]', cells: e(9) },
  { n: 14, h: 'h-[18px]', cells: [{}, { c: '客户:' }, { cs: 7, rs: 2 }] },
  { n: 15, h: 'h-[18px]', cells: [{}, { t: 'Messers:' }] },
  { n: 16, h: 'h-[18px]', cells: [{}, { c: '地址:' }, { cs: 7, rs: 2 }] },
  { n: 17, h: 'h-[18px]', cells: [{}, { t: 'Add:' }] },
  { n: 18, h: 'h-[18px]', cells: e(9) },
  { n: 19, h: 'h-[20px]', cells: [{}, { c: '输出港:' }, {}, {}, { note: true }, {}, { c: '目的:' }, {}, {}] },
];

function cellText(c: Cell) {
  if (c.title) return "text-center font-['Liberation_Sans'] text-2xl font-bold";
  if (c.c) return 'text-right text-[15px]';
  return "text-right font-['Liberation_Sans'] text-[13px]";
}

function Grid() {
  return (
    <div className="min-w-0 flex-1 overflow-hidden border-r border-[#999] bg-white">
      <table className="w-full table-fixed border-separate border-spacing-0">
        <colgroup>
          <col className="w-[29px]" />
          <col className="w-[73px]" />
          <col className="w-[107px]" />
          <col className="w-[74px]" />
          <col className="w-[66px]" />
          <col className="w-[71px]" />
          <col className="w-[123px]" />
          <col className="w-[91px]" />
          <col className="w-[120px]" />
          <col />
        </colgroup>
        <thead>
          <tr className="h-[18px] font-['Liberation_Serif'] text-sm leading-[14px]">
            <th className="border-b border-r border-[#ababab] bg-[#e6e6e6] p-0">
              <span className="ml-auto mr-1 block h-0 w-0 border-b-[9px] border-l-[9px] border-b-[#b4b4b4] border-l-transparent" />
            </th>
            <th className="border-b border-r border-[#ababab] bg-[#e6e6e6] p-0 align-bottom font-normal text-black">A</th>
            {['B', 'C', 'D', 'E', 'F', 'G', 'H', ''].map((l) => (
              <th key={l} className="border-b-[3px] border-r border-b-[#217346] border-r-[#b5b5b5] bg-[#d2d2d2] p-0 align-bottom font-normal text-[#185c37]">{l}</th>
            ))}
          </tr>
        </thead>
        <tbody>
          {sheetRows.map((r) => (
            <tr key={r.n} className={r.h}>
              <th className="border-b border-r border-[#c0c0c0] border-r-[#999] bg-[#e6e6e6] p-0 align-bottom font-['Liberation_Serif'] text-base font-normal leading-3">{r.n}</th>
              {r.cells.map((c, i) => (
                <td key={i} colSpan={c.cs} rowSpan={c.rs} className={`relative whitespace-nowrap border-b border-r border-[#d0d0d0] p-0 pr-[2px] leading-3 ${cellText(c)}`}>
                  {c.c || c.t}
                  {c.note && <span className="absolute right-0 top-0 border-l-[7px] border-t-[7px] border-l-transparent border-t-[#cc1122]" />}
                </td>
              ))}
            </tr>
          ))}
        </tbody>
      </table>
    </div>
  );
}

function Spreadsheet() {
  return (
    <main className="ml-[3px] mr-[5px] mt-[9px] flex min-w-0 flex-1 flex-col border border-b-0 border-black bg-[#e6e6e6]">
      <div className="h-[20px] shrink-0 bg-[#152a75] pl-1 text-xs leading-[21px] text-[#a6b0da]">文件</div>
      <SheetTop />
      <Ribbon />
      <FormulaBar />
      <div className="flex min-h-0 flex-1">
        <Grid />
        <div className="flex w-[20px] flex-col items-center">
          <ArrowBtn dir="up" grey />
          <div className="mt-[13px] h-[163px] w-[15px] border border-[#ababab] bg-white" />
          <div className="w-[15px] flex-1 bg-[#dadada]" />
          <ArrowBtn dir="down" grey />
        </div>
      </div>
      <div className="flex h-[28px] shrink-0 items-start border-t border-[#999] pr-[19px] text-xs">
        <div className="flex w-[100px] gap-[20px] pl-[25px] pt-[8px]">
          <Svg className="w-2 h-2"><path d="M12 0v16L3 8z" fill="#b8b8b8" stroke="none" /></Svg>
          <Svg className="w-2 h-2"><path d="M4 0v16l9-8z" fill="#b8b8b8" stroke="none" /></Svg>
        </div>
        <button className="h-[24px] w-[63px] border-b-2 border-r border-b-[#217346] border-r-[#ababab] bg-white text-[13px] text-[#217346]">格式一</button>
        <button aria-label="new sheet" className="ml-[32px] mt-[3px]">
          <Svg className="w-[18px] h-[18px]"><circle cx="8" cy="8" r="6.5" stroke="#bdbdbd" /><path d="M8 4.500v7M4.5 8h7" stroke="#bdbdbd" strokeWidth="2" /></Svg>
        </button>
        <div className="ml-auto mr-[14px] mt-[6px] flex flex-col gap-[3px]">
          {[0, 1, 2].map((i) => <span key={i} className="h-[2px] w-[2px] bg-[#b4b4b4]" />)}
        </div>
        <div className="mt-[4px] flex w-[291px] bg-[#dadada]">
          <ArrowBtn dir="left" grey />
          <div className="w-[174px] border border-[#ababab] bg-white" />
          <span className="flex-1" />
          <ArrowBtn dir="right" grey />
        </div>
      </div>
    </main>
  );
}

export default function App() {
  return (
    <div className="flex h-screen flex-col overflow-hidden bg-[#e0b0bc] font-['Noto_Sans','Noto_Sans_CJK_SC',sans-serif] text-black">
      <Header />
      <h1 className="h-[31px] shrink-0 border-b border-[#ead5da] bg-white pl-3 text-[18px] font-medium italic leading-[31px] text-[#6a70a0]">业务文档导航：显示文档</h1>
      <AppToolbar />
      <div className="flex min-h-0 flex-1">
        <aside className="flex w-[539px] shrink-0 flex-col pt-[7px]">
          <div className="px-[5px]"><DocumentTree /></div>
          <div className="flex h-[3px] shrink-0 items-center justify-center gap-[2px]">
            {[0, 1, 2, 3, 4].map((i) => <span key={i} className="h-[2px] w-[2px] bg-[#8f6a74]" />)}
          </div>
          <TypePanel />
        </aside>
        <Spreadsheet />
      </div>
    </div>
  );
}
